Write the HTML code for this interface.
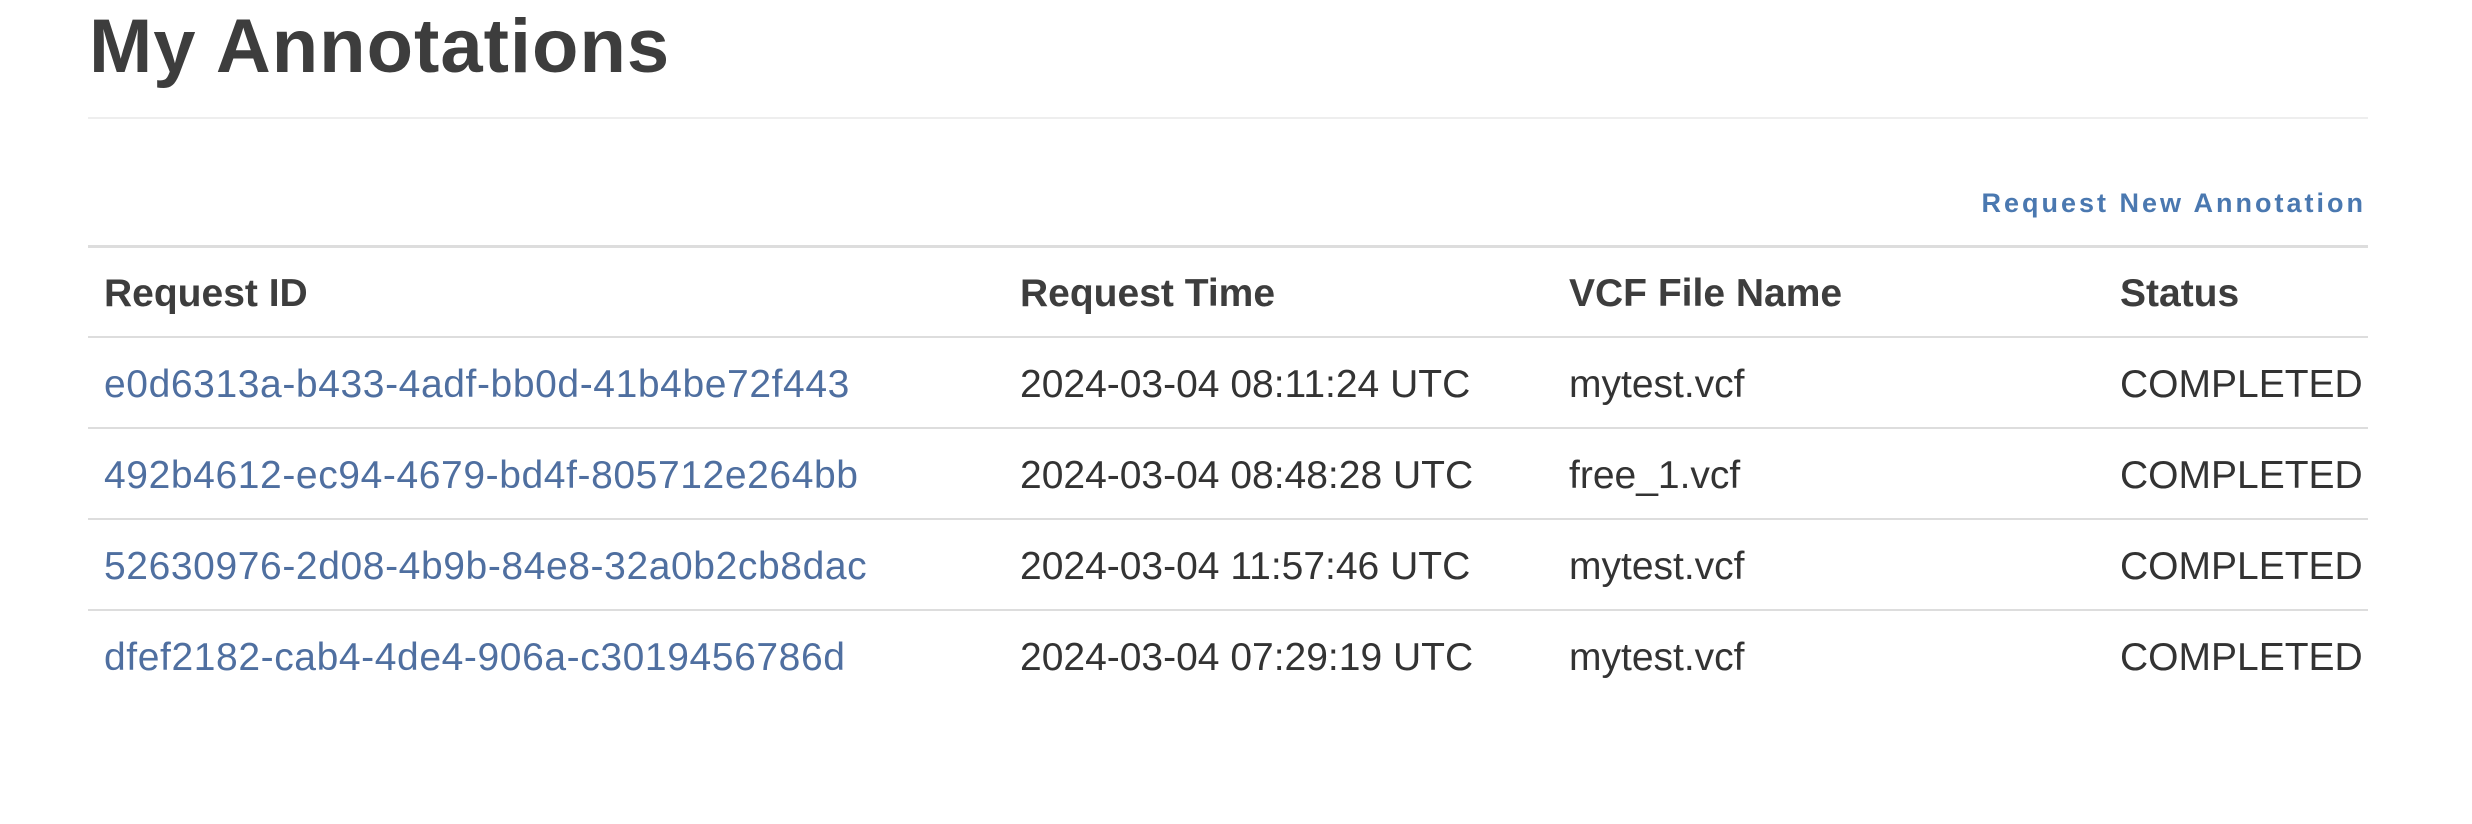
<!DOCTYPE html>
<html><head><meta charset="utf-8"><style>
html,body{margin:0;padding:0;background:#fff;width:2472px;height:824px;overflow:hidden}
body{font-family:"Liberation Sans",sans-serif;color:#333;position:relative}
h1{position:absolute;left:89px;top:4px;margin:0;font-size:76px;font-weight:bold;color:#3d3d3d;line-height:86px;letter-spacing:1px}
.hr{position:absolute;left:88px;width:2280px;top:117px;height:2px;background:#eee}
.new{position:absolute;right:106px;top:188px;font-size:27px;font-weight:bold;color:#4a78b0;letter-spacing:3px}
table{position:absolute;left:88px;top:245px;width:2280px;border-collapse:collapse;border-top:3px solid #ddd}
td,th{text-align:left;padding:4px 0 0 16px;height:85px;font-size:39px;border-top:2px solid #ddd;white-space:nowrap}
th{font-weight:bold;color:#3d3d3d;height:84px;border-top:none;border-bottom:2px solid #ddd}
tr:first-child td{border-top:none}
td a{color:#4f6fa0;text-decoration:none;letter-spacing:0.6px}
</style></head><body>
<h1>My Annotations</h1>
<div class="hr"></div>
<div class="new">Request New Annotation</div>
<table>
<colgroup><col style="width:916px"><col style="width:549px"><col style="width:551px"><col></colgroup>
<tr><th>Request ID</th><th>Request Time</th><th>VCF File Name</th><th>Status</th></tr>
<tr><td><a>e0d6313a-b433-4adf-bb0d-41b4be72f443</a></td><td>2024-03-04 08:11:24 UTC</td><td>mytest.vcf</td><td>COMPLETED</td></tr>
<tr><td><a>492b4612-ec94-4679-bd4f-805712e264bb</a></td><td>2024-03-04 08:48:28 UTC</td><td>free_1.vcf</td><td>COMPLETED</td></tr>
<tr><td><a>52630976-2d08-4b9b-84e8-32a0b2cb8dac</a></td><td>2024-03-04 11:57:46 UTC</td><td>mytest.vcf</td><td>COMPLETED</td></tr>
<tr><td><a>dfef2182-cab4-4de4-906a-c3019456786d</a></td><td>2024-03-04 07:29:19 UTC</td><td>mytest.vcf</td><td>COMPLETED</td></tr>
</table>
</body></html>
